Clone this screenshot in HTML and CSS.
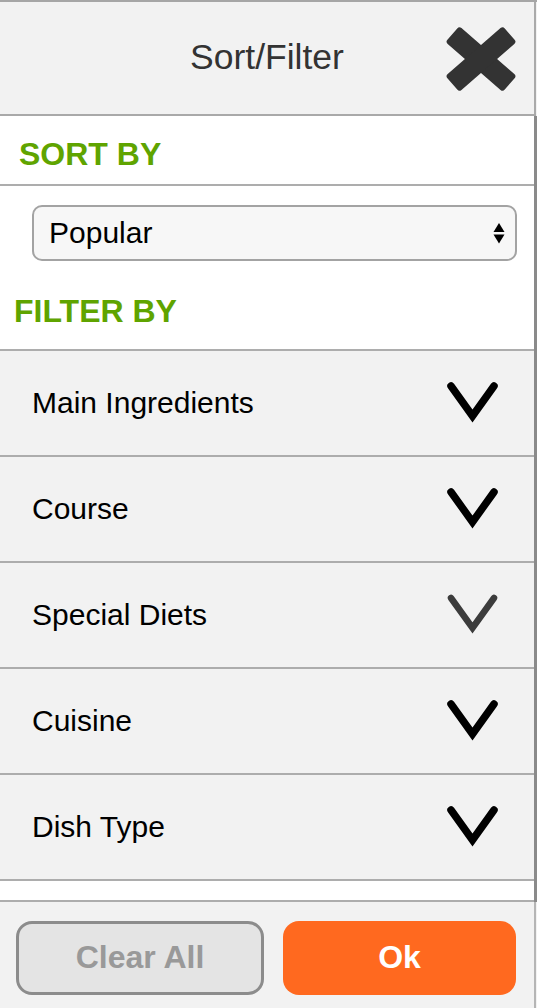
FILE: index.html
```html
<!DOCTYPE html>
<html lang="en">
<head>
<meta charset="utf-8">
<title>Sort/Filter</title>
<link rel="stylesheet" href="styles.css">
</head>
<body>
<div class="panel">
  <header class="header">
    <span></span>
    <h1 class="title">Sort/Filter</h1>
    <button class="close" aria-label="Close">
      <svg width="72" height="64" viewBox="0 0 72 64">
        <rect x="-2" y="21.5" width="76" height="21" rx="3" fill="#333" transform="rotate(41 36 32)"/>
        <rect x="-2" y="21.5" width="76" height="21" rx="3" fill="#333" transform="rotate(-41 36 32)"/>
      </svg>
    </button>
  </header>

  <div class="scroll">
    <div class="sort-head">SORT BY</div>
    <div class="sort-body">
      <div class="select">
        <span class="select-value">Popular</span>
        <span class="select-arrows">
          <svg width="12" height="21" viewBox="0 0 12 21">
            <polygon points="6,0 11.5,9 0.5,9" fill="#000"/>
            <polygon points="0.5,11.5 11.5,11.5 6,20.5" fill="#000"/>
          </svg>
        </span>
      </div>
      <div class="filter-head">FILTER BY</div>
    </div>

    <div class="row"><span class="label">Main Ingredients</span><svg class="chev" width="53" height="43" viewBox="0 0 53 43"><polyline points="5,5 26.5,35 48,5"/></svg></div>
    <div class="row"><span class="label">Course</span><svg class="chev" width="53" height="43" viewBox="0 0 53 43"><polyline points="5,5 26.5,35 48,5"/></svg></div>
    <div class="row"><span class="label">Special Diets</span><svg class="chev chev-light" width="53" height="43" viewBox="0 0 53 43"><polyline points="5,5 26.5,35 48,5"/></svg></div>
    <div class="row"><span class="label">Cuisine</span><svg class="chev" width="53" height="43" viewBox="0 0 53 43"><polyline points="5,5 26.5,35 48,5"/></svg></div>
    <div class="row"><span class="label">Dish Type</span><svg class="chev" width="53" height="43" viewBox="0 0 53 43"><polyline points="5,5 26.5,35 48,5"/></svg></div>
    <div class="row-partial"></div>
  </div>

  <footer class="footer">
    <button class="btn btn-clear">Clear All</button>
    <button class="btn btn-ok">Ok</button>
  </footer>
</div>
</body>
</html>
```

FILE: styles.css
```css
* { box-sizing: border-box; }

html, body {
  margin: 0;
  padding: 0;
  background: #f2f2f2;
}

body {
  font-family: "Liberation Sans", Arial, Helvetica, sans-serif;
  width: 537px;
  height: 1008px;
  overflow: hidden;
}

.panel {
  width: 537px;
  border-top: 2px solid #a6a6a6;
}

.header {
  height: 114px;
  display: grid;
  grid-template-columns: 1fr auto 1fr;
  align-items: center;
  background: #f2f2f2;
  border-bottom: 2px solid #a9a9a9;
  border-right: 2px solid #aaaaaa;
  margin-right: 1px;
}

.title {
  margin: 0;
  font-size: 35.5px;
  font-weight: normal;
  color: #333;
  line-height: 40px;
  padding-bottom: 2px;
}

.close {
  justify-self: end;
  margin-right: 17px;
  margin-top: 2px;
  border: 0;
  padding: 0;
  background: none;
  display: flex;
}

.scroll {
  border-right: 3px solid #8a8a8a;
}

.sort-head {
  height: 70px;
  background: #fff;
  color: #5fa400;
  font-weight: bold;
  font-size: 32px;
  line-height: 36px;
  padding: 20px 0 0 19px;
  border-bottom: 2px solid #adadad;
}

.sort-body {
  background: #fff;
  padding: 19px 17px 19px 0;
  border-bottom: 2px solid #adadad;
  height: 165px;
}

.select {
  margin-left: 32px;
  height: 56px;
  border: 2px solid #a3a3a3;
  border-radius: 10px;
  background: #f7f7f7;
  display: flex;
  align-items: center;
  justify-content: space-between;
  padding: 0 10px 0 15px;
}

.select-value {
  font-size: 30px;
  color: #000;
}

.select-arrows {
  display: flex;
}

.filter-head {
  margin-top: 32px;
  padding-left: 14px;
  color: #5fa400;
  font-weight: bold;
  font-size: 32px;
  line-height: 36px;
}

.row {
  height: 106px;
  background: #f2f2f2;
  border-bottom: 2px solid #adadad;
  display: flex;
  align-items: center;
  justify-content: space-between;
  padding: 0 35px 0 32px;
}

.label {
  font-size: 30px;
  color: #000;
}

.chev {
  fill: none;
  stroke: #000;
  stroke-width: 7.5;
  stroke-linecap: round;
  stroke-linejoin: miter;
  margin-top: -2px;
}

.chev-light {
  stroke: #3c3c3c;
  stroke-width: 6.5;
}

.row-partial {
  height: 21px;
  background: #fff;
  border-bottom: 2px solid #adadad;
}

.footer {
  display: grid;
  grid-template-columns: 248px 233px;
  gap: 19px;
  padding: 19px 0 0 16px;
  border-right: 2px solid #b5b5b5;
  margin-right: 1px;
  height: 120px;
}

.btn {
  height: 74px;
  border-radius: 16px;
  font-family: "Liberation Sans", Arial, Helvetica, sans-serif;
  font-weight: bold;
  font-size: 32px;
  padding: 0 0 2px 0;
}

.btn-clear {
  background: #e4e4e4;
  border: 3px solid #8c8c8c;
  color: #999;
}

.btn-ok {
  background: #ff691f;
  border: 0;
  color: #fff;
}
```
